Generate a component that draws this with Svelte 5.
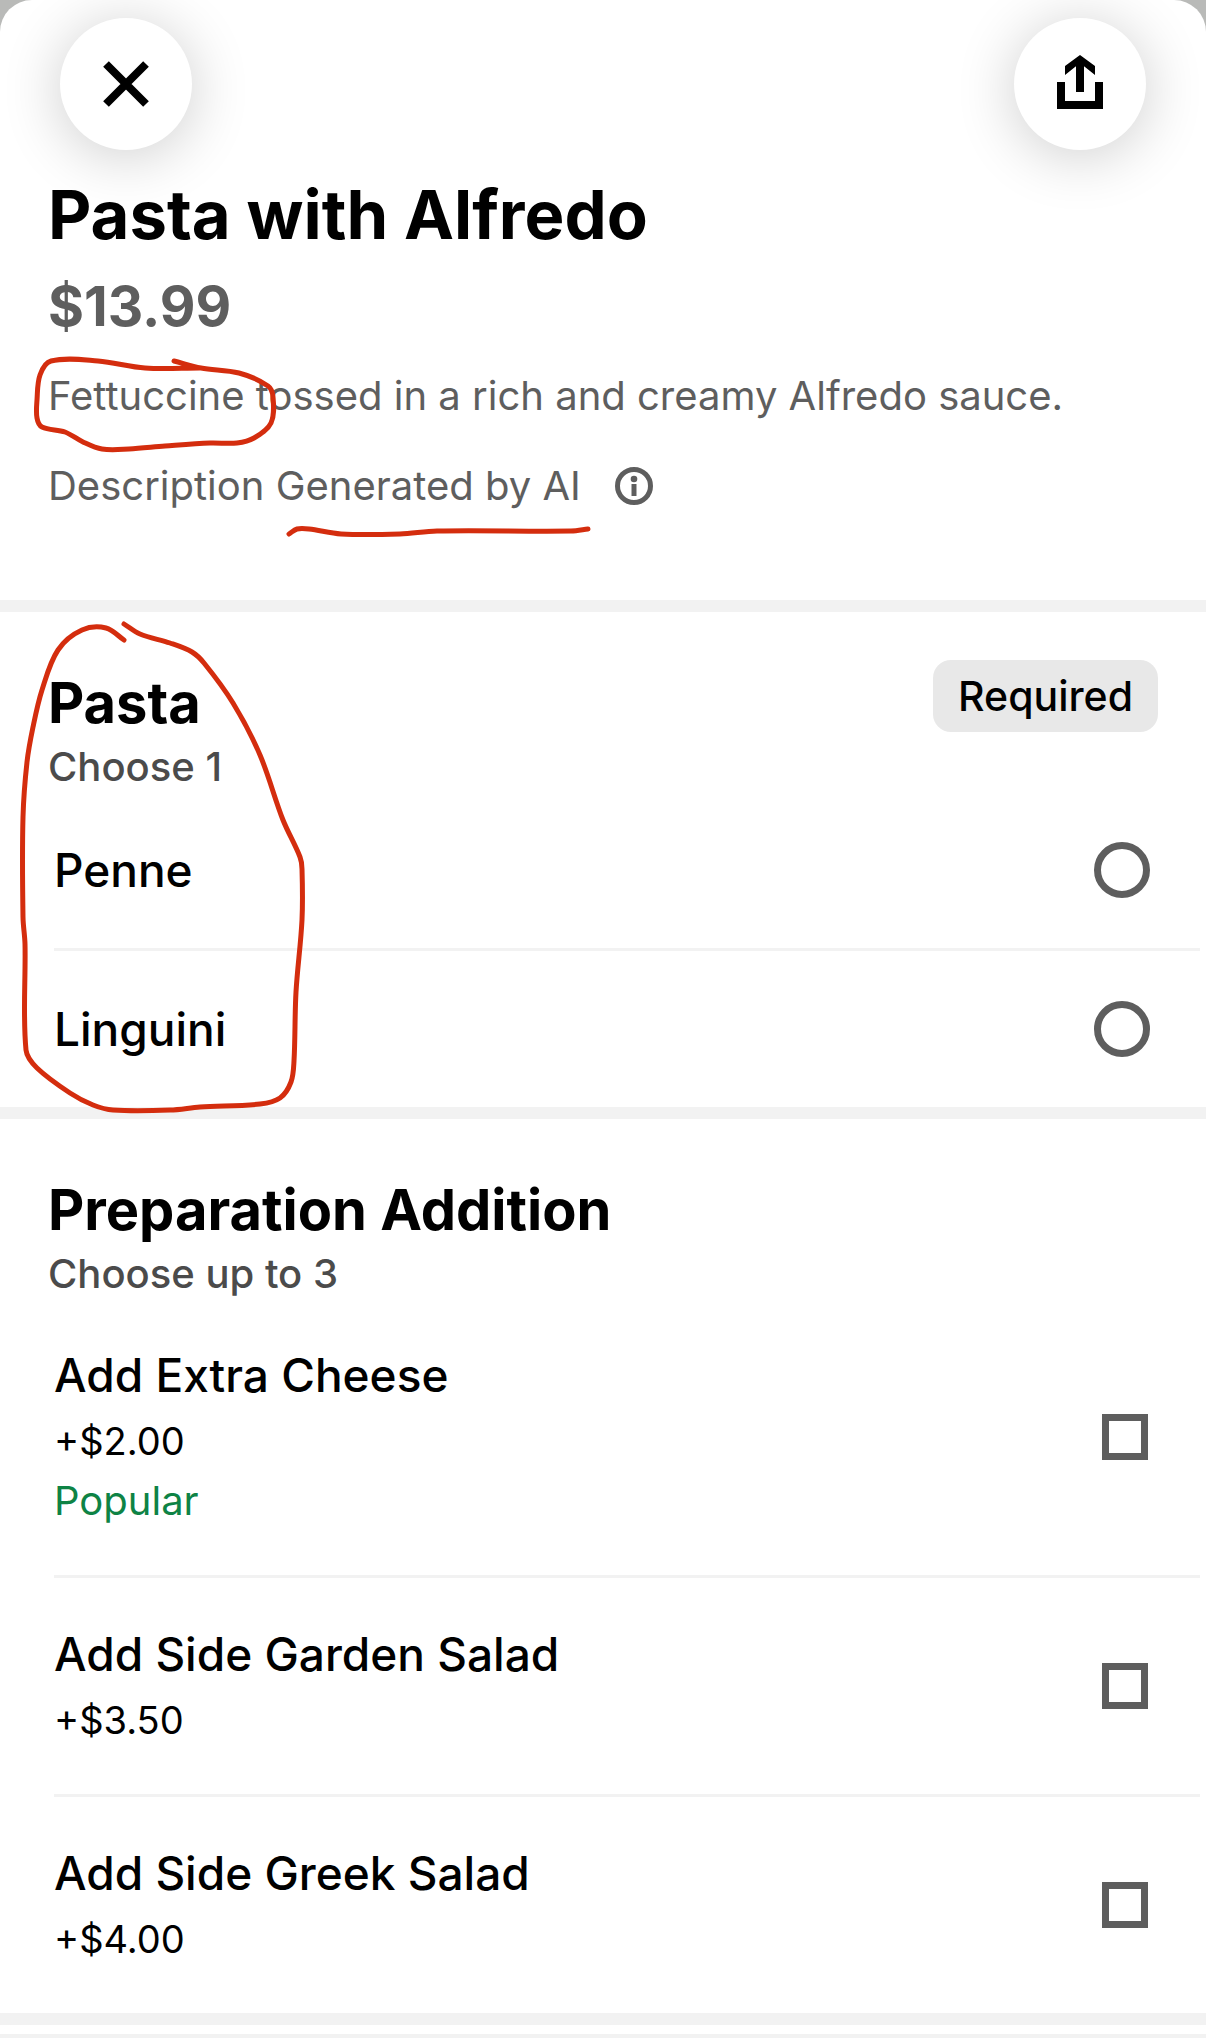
<script lang="ts">

    type Point = [number, number];

    type Option = {
        id: string;
        name: string;
        price?: string;
        tag?: string;
    }

    let pasta = '';
    let additions: string[] = [];

    const pastas: Option[] = [
        { id: 'penne', name: 'Penne' },
        { id: 'linguini', name: 'Linguini' },
    ];

    const extras: Option[] = [
        { id: 'cheese', name: 'Add Extra Cheese', price: '+$2.00', tag: 'Popular' },
        { id: 'garden', name: 'Add Side Garden Salad', price: '+$3.50' },
        { id: 'greek', name: 'Add Side Greek Salad', price: '+$4.00' },
    ];

    // red pen marks drawn over the page
    const marks: Point[][] = [
        [[174, 361], [201, 368], [239, 373], [268, 386], [273, 397], [271, 423], [254, 438], [237, 443], [210, 443],
         [165, 446], [129, 449], [102, 449], [83, 442], [65, 432], [42, 427], [37, 418], [37, 400], [40, 375],
         [51, 361], [98, 361], [145, 368], [200, 368]],
        [[289, 534], [297, 529], [309, 529], [341, 534], [400, 534], [437, 531], [571, 531], [588, 529]],
        [[124, 624], [140, 634], [170, 643], [192, 652], [204, 663], [233, 703], [260, 755], [283, 820], [300, 857],
         [302, 869], [302, 920], [296, 992], [294, 1061], [291, 1082], [280, 1098], [260, 1104], [200, 1107],
         [170, 1110], [113, 1110], [93, 1105], [70, 1093], [37, 1068], [26, 1050], [25, 944], [23, 917], [23, 817],
         [27, 762], [33, 727], [42, 690], [58, 650], [82, 630], [106, 628], [124, 640]],
    ];

    function smooth(points: Point[]) {
        let d = `M${points[0][0]} ${points[0][1]}`;
        for (let i = 0; i < points.length - 1; i++) {
            const a = points[i - 1] || points[i];
            const b = points[i];
            const c = points[i + 1];
            const e = points[i + 2] || c;
            // handles stay short next to long straight runs
            const len = Math.hypot(c[0] - b[0], c[1] - b[1]) / 3;
            const t1 = Math.hypot(c[0] - a[0], c[1] - a[1]) || 1;
            const t2 = Math.hypot(e[0] - b[0], e[1] - b[1]) || 1;
            const x1 = b[0] + (c[0] - a[0]) / t1 * len;
            const y1 = b[1] + (c[1] - a[1]) / t1 * len;
            const x2 = c[0] - (e[0] - b[0]) / t2 * len;
            const y2 = c[1] - (e[1] - b[1]) / t2 * len;
            d += ` C${x1.toFixed(1)} ${y1.toFixed(1)} ${x2.toFixed(1)} ${y2.toFixed(1)} ${c[0]} ${c[1]}`;
        }
        return d;
    }
</script>

<div class="backdrop">
    <main class="sheet">
        <header class="toolbar">
            <button class="round-btn" aria-label="Close">
                <svg width="46" height="46" viewBox="0 0 46 46">
                    <path d="M3 3L43 43M43 3L3 43" stroke="#000" stroke-width="8" />
                </svg>
            </button>
            <button class="round-btn" aria-label="Share">
                <svg width="46" height="58" viewBox="0 0 46 58">
                    <path d="M4 27V50H42V27" fill="none" stroke="#000" stroke-width="8" />
                    <path d="M23 37V6" stroke="#000" stroke-width="8" />
                    <path d="M23 0L38 11V20L23 8L8 20V11Z" />
                </svg>
            </button>
        </header>

        <section class="intro">
            <h1>Pasta with Alfredo</h1>
            <p class="total">$13.99</p>
            <p class="text">Fettuccine tossed in a rich and creamy Alfredo sauce.</p>
            <div class="source">
                <p class="text">Description Generated by AI</p>
                <button class="info-btn" aria-label="About this description">
                    <svg width="38" height="38" viewBox="0 0 38 38">
                        <circle cx="19" cy="19" r="16.5" fill="none" stroke="#5e5e5e" stroke-width="5" />
                        <circle cx="19" cy="12" r="3.3" fill="#5e5e5e" />
                        <path d="M19 17V29" stroke="#5e5e5e" stroke-width="5" />
                    </svg>
                </button>
            </div>
        </section>

        <section class="group">
            <div class="group-head">
                <div>
                    <h2>Pasta</h2>
                    <p class="hint">Choose 1</p>
                </div>
                <span class="badge">Required</span>
            </div>
            <div class="options">
                {#each pastas as item}
                    <label class="option" for={item.id}>
                        <span class="name">{item.name}</span>
                        <input type="radio" id={item.id} name="pasta" value={item.id} bind:group={pasta}>
                    </label>
                {/each}
            </div>
        </section>

        <section class="group">
            <div class="group-head">
                <div>
                    <h2>Preparation Addition</h2>
                    <p class="hint">Choose up to 3</p>
                </div>
            </div>
            <div class="options">
                {#each extras as item}
                    <label class="option" for={item.id}>
                        <span class="details">
                            <span class="name">{item.name}</span>
                            <span class="price">{item.price}</span>
                            {#if item.tag}
                                <span class="tag">{item.tag}</span>
                            {/if}
                        </span>
                        <input type="checkbox" id={item.id} value={item.id} bind:group={additions}>
                    </label>
                {/each}
            </div>
        </section>

        <div class="end"></div>

        <svg class="marks" width="600" height="1120" viewBox="0 0 600 1120">
            {#each marks as points}
                <path d={smooth(points)} />
            {/each}
        </svg>
    </main>
</div>

<style>
    :global(body) {
        background: #fff;
    }
    .backdrop {
        background: #b9bab8;
        font-family: Inter, "Liberation Sans", sans-serif;
        color: #000;
    }
    .sheet {
        position: relative;
        background: #fff;
        border-radius: 32px 32px 0 0;
        overflow: hidden;
    }
    h1, h2, p {
        margin: 0;
    }
    .toolbar {
        display: flex;
        justify-content: space-between;
        padding: 18px 60px 0;
    }
    .round-btn {
        display: flex;
        align-items: center;
        justify-content: center;
        width: 132px;
        height: 132px;
        padding: 0;
        border: none;
        border-radius: 50%;
        background: #fff;
        box-shadow: 0 6px 60px rgba(0, 0, 0, 0.2);
    }
    .intro {
        padding: 25px 48px 84px;
    }
    h1 {
        font-size: 67px;
        line-height: 80px;
        font-weight: 700;
    }
    .total {
        margin-top: 15px;
        font-size: 55px;
        line-height: 72px;
        font-weight: 700;
        color: #5e5e5e;
    }
    .text {
        font-size: 40px;
        line-height: 60px;
        color: #5e5e5e;
    }
    .total + .text {
        margin-top: 24px;
    }
    .source {
        display: flex;
        align-items: center;
        gap: 34px;
        margin-top: 30px;
    }
    .info-btn {
        display: flex;
        padding: 0;
        border: none;
        background: none;
    }
    .group {
        border-top: 12px solid #f2f2f2;
        padding-top: 48px;
    }
    .group-head {
        display: flex;
        justify-content: space-between;
        align-items: flex-start;
        padding: 0 48px;
    }
    h2 {
        padding-top: 4px;
        font-size: 56px;
        line-height: 78px;
        font-weight: 700;
    }
    .hint {
        font-size: 40px;
        line-height: 50px;
        font-weight: 500;
        color: #4b4b4b;
    }
    .badge {
        padding: 0 25px;
        border-radius: 18px;
        background: #e8e8e8;
        font-size: 41px;
        line-height: 72px;
        font-weight: 500;
    }
    .options {
        margin: 0 6px 0 54px;
    }
    .option {
        display: flex;
        align-items: center;
        justify-content: space-between;
        padding: 44px 52px 44px 0;
    }
    .option + .option {
        border-top: 3px solid #f2f2f2;
    }
    .details {
        display: flex;
        flex-direction: column;
    }
    .name {
        font-size: 46px;
        line-height: 68px;
        font-weight: 500;
    }
    .details .name {
        padding-bottom: 4px;
        line-height: 64px;
    }
    .price {
        font-size: 38px;
        line-height: 60px;
    }
    .tag {
        font-size: 40px;
        line-height: 60px;
        color: #0e8345;
    }
    input {
        appearance: none;
        box-sizing: border-box;
        width: 46px;
        height: 46px;
        margin: 0;
        border: 7px solid #5e5e5e;
        background: #fff;
    }
    input[type="radio"] {
        width: 56px;
        height: 56px;
        margin-right: -2px;
        border-radius: 50%;
    }
    input:checked {
        background: #000;
    }
    .end {
        height: 9px;
        border-top: 12px solid #f2f2f2;
        border-bottom: 4px solid #f2f2f2;
    }
    .marks {
        position: absolute;
        top: 0;
        left: 0;
        pointer-events: none;
    }
    .marks path {
        fill: none;
        stroke: #d42d0e;
        stroke-width: 5;
        stroke-linecap: round;
        stroke-linejoin: round;
    }
</style>
